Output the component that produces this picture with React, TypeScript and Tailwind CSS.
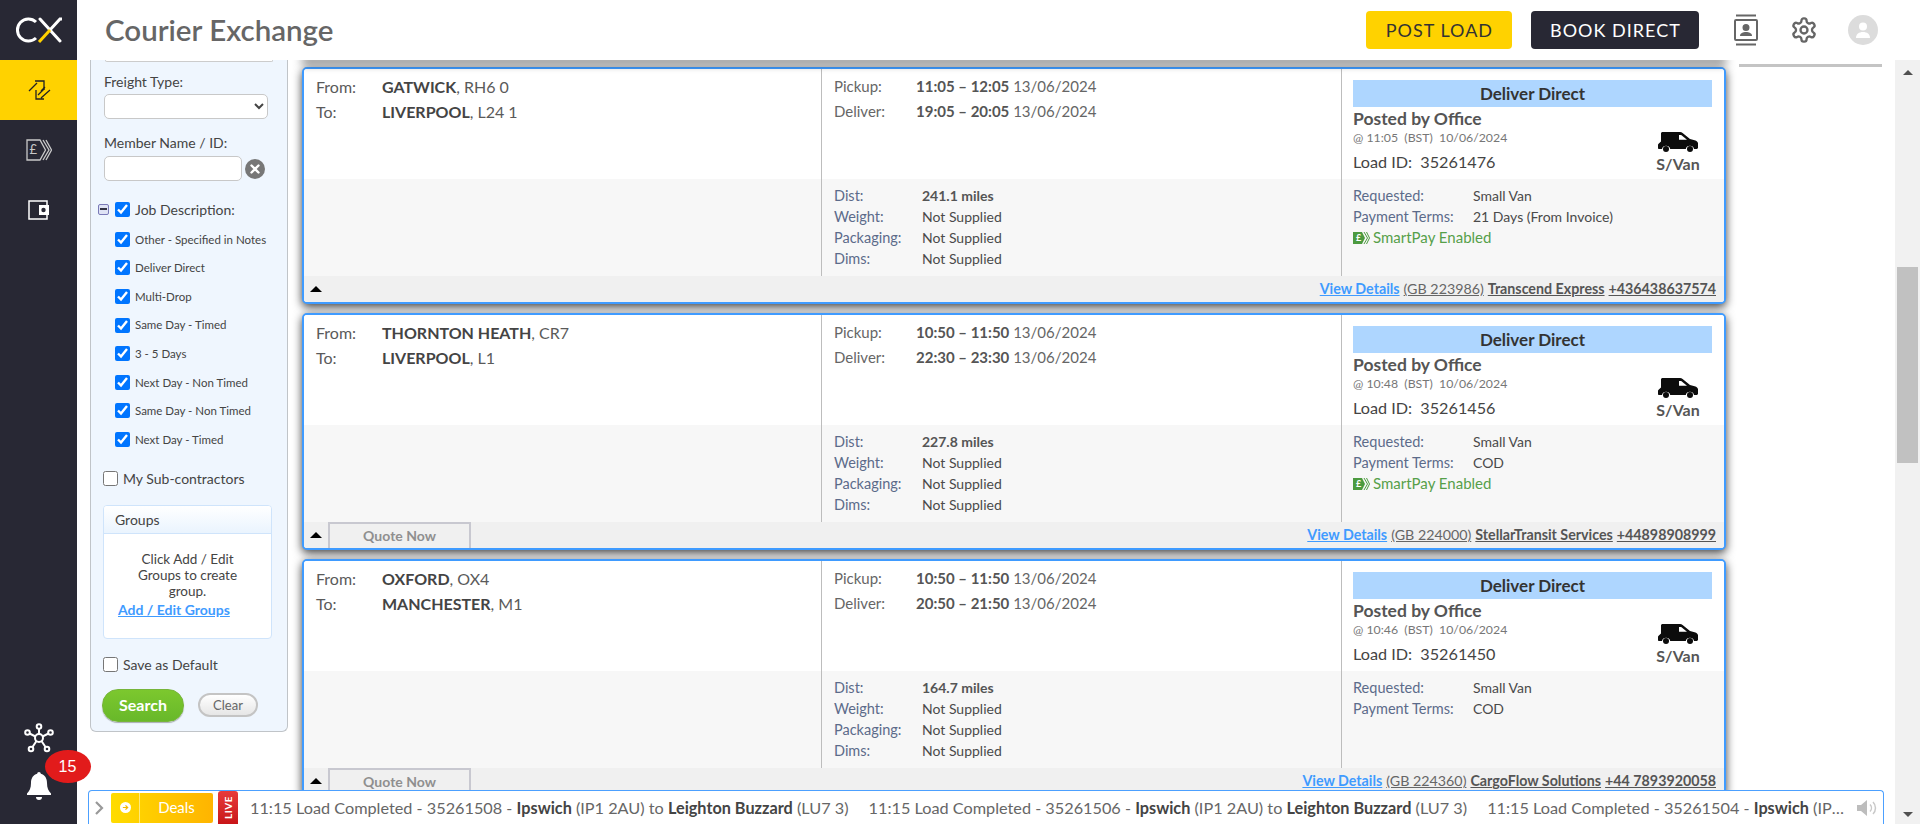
import React from "react";

type Load = {
  from: string; fromPc: string; to: string; toPc: string;
  pick: string; pickD: string; del: string; delD: string;
  miles: string; posted: string; id: string; terms: string; smart: boolean;
  gb: string; company: string; phone: string; quote: boolean;
};

const loads: Load[] = [
  { from: "GATWICK", fromPc: "RH6 0", to: "LIVERPOOL", toPc: "L24 1", pick: "11:05 – 12:05", pickD: "13/06/2024", del: "19:05 – 20:05", delD: "13/06/2024", miles: "241.1 miles", posted: "11:05", id: "35261476", terms: "21 Days (From Invoice)", smart: true, gb: "(GB 223986)", company: "Transcend Express", phone: "+436438637574", quote: false },
  { from: "THORNTON HEATH", fromPc: "CR7", to: "LIVERPOOL", toPc: "L1", pick: "10:50 – 11:50", pickD: "13/06/2024", del: "22:30 – 23:30", delD: "13/06/2024", miles: "227.8 miles", posted: "10:48", id: "35261456", terms: "COD", smart: true, gb: "(GB 224000)", company: "StellarTransit Services", phone: "+44898908999", quote: true },
  { from: "OXFORD", fromPc: "OX4", to: "MANCHESTER", toPc: "M1", pick: "10:50 – 11:50", pickD: "13/06/2024", del: "20:50 – 21:50", delD: "13/06/2024", miles: "164.7 miles", posted: "10:46", id: "35261450", terms: "COD", smart: false, gb: "(GB 224360)", company: "CargoFlow Solutions", phone: "+44 7893920058", quote: true },
];

const jobs = ["Other - Specified in Notes", "Deliver Direct", "Multi-Drop", "Same Day - Timed", "3 - 5 Days", "Next Day - Non Timed", "Same Day - Non Timed", "Next Day - Timed"];

function Van() {
  return (
    <svg width="40" height="20" viewBox="0 0 40 20">
      <path fill="#0c0c0c" d="M3 1.500C3 .7 3.700 0 4.500 0H22c1 0 1.900.3 2.600 1l7.400 6 5.500 1.500c1.300.5 2.500 1.500 2.500 3v4c0 .8-.7 1.500-1.500 1.500H36a4.200 4.200 0 0 0-8.200 0H12.200A4.200 4.200 0 0 0 4 17H1c-.6 0-1-.5-1-1v-3c0-.5.2-1 .6-1.300L3 9.500z" />
      <path fill="#fff" d="M21 3h2.200l5.800 4.800H21z" />
      <circle cx="8" cy="17" r="3" fill="#0c0c0c" />
      <circle cx="32" cy="17" r="3" fill="#0c0c0c" />
    </svg>
  );
}

function PoundTag() {
  const c = "#4c9a3f";
  return (
    <span className="relative inline-flex w-[17px] h-[14px] mr-[3px] items-center">
      <svg width="17" height="14" viewBox="0 0 17 14" className="absolute left-0 top-0">
        <path fill={c} d="M0 1h9l3 6-3 6H0z" />
        <path fill="none" stroke={c} strokeWidth="1" d="M11 1l3.500 6-3.500 6M13.500 1l3 6-3 6" />
      </svg>
      <span className="relative text-white text-[9px] font-bold pl-[3px]">£</span>
    </span>
  );
}

function Card({ l, first }: { l: Load; first: boolean }) {
  const label = "text-[#5c6b8a] text-[14.500px]";
  return (
    <div className={`${first ? "" : "mt-[9px]"} w-[1424px] h-[237px] shrink-0 border-2 border-[#3f9bff] rounded-[5px] bg-white shadow-[0_3px_10px_rgba(0,0,0,0.75)] flex flex-col overflow-hidden`}>
      <div className="flex h-[110px] bg-white">
        <div className="w-[517px] pl-[12px] pt-[5px] text-[16px] leading-[25px] text-[#5a5a5a]">
          <div className="flex"><span className="w-[66px]">From:</span><span><b className="text-[#444] font-bold">{l.from}</b>, {l.fromPc}</span></div>
          <div className="flex"><span className="w-[66px]">To:</span><span><b className="text-[#444] font-bold">{l.to}</b>, {l.toPc}</span></div>
        </div>
        <div className="w-[520px] border-l border-[#bdbdbd] pl-[12px] pt-[5px] text-[15px] leading-[24.500px] text-[#666]">
          <div className="flex"><span className="w-[82px]">Pickup:</span><span><b className="text-[#555] font-bold">{l.pick}</b> {l.pickD}</span></div>
          <div className="flex"><span className="w-[82px]">Deliver:</span><span><b className="text-[#555] font-bold">{l.del}</b> {l.delD}</span></div>
        </div>
        <div className="flex-1 border-l border-[#bdbdbd] pl-[11px] pr-[12px] pt-[11px]">
          <div className="h-[27px] bg-[#aed6ff] text-center text-[17px] leading-[27px] font-bold text-[#333]">Deliver Direct</div>
          <div className="flex justify-between">
            <div>
              <div className="text-[17.500px] leading-[23px] font-bold text-[#555]">Posted by Office</div>
              <div className="text-[12.300px] leading-[16px] text-[#777] whitespace-pre">@ {l.posted}  (BST)  10/06/2024</div>
              <div className="text-[16.200px] leading-[31px] text-[#444] whitespace-pre">Load ID:  {l.id}</div>
            </div>
            <div className="w-[60px] mr-[4px] flex flex-col items-center pt-[25px]">
              <Van />
              <div className="text-[16px] leading-[24px] font-bold text-[#555]">S/Van</div>
            </div>
          </div>
        </div>
      </div>
      <div className="flex h-[97px] bg-[#f7f7f7] text-[14px] leading-[21px] text-[#4a4a4a]">
        <div className="w-[517px]" />
        <div className="w-[520px] border-l border-[#bdbdbd] pl-[12px] pt-[6px]">
          <div className="flex"><span className={`w-[88px] ${label}`}>Dist:</span><b className="text-[#555] font-bold">{l.miles}</b></div>
          <div className="flex"><span className={`w-[88px] ${label}`}>Weight:</span><span>Not Supplied</span></div>
          <div className="flex"><span className={`w-[88px] ${label}`}>Packaging:</span><span>Not Supplied</span></div>
          <div className="flex"><span className={`w-[88px] ${label}`}>Dims:</span><span>Not Supplied</span></div>
        </div>
        <div className="flex-1 border-l border-[#bdbdbd] pl-[11px] pt-[6px]">
          <div className="flex"><span className={`w-[120px] ${label}`}>Requested:</span><span>Small Van</span></div>
          <div className="flex"><span className={`w-[120px] ${label}`}>Payment Terms:</span><span>{l.terms}</span></div>
          {l.smart && <div className="flex items-center text-[#56a04a] text-[15px]"><PoundTag />SmartPay Enabled</div>}
        </div>
      </div>
      <div className="flex items-end h-[26px] bg-[#f0f0f0]">
        <div className="w-[24px] h-full flex items-center justify-center shrink-0">
          <div className="w-0 h-0 border-l-[6px] border-r-[6px] border-b-[6px] border-l-transparent border-r-transparent border-b-black" />
        </div>
        {l.quote && <div className="w-[143px] h-[26px] border-2 border-b-0 border-[#c8c8d0] text-center text-[14px] leading-[24px] font-bold text-[#8f8f8f]">Quote Now</div>}
        <div className="flex-1 h-full flex items-center justify-end pr-[8px] text-[14.250px] text-[#555] gap-[4px] whitespace-nowrap">
          <a className="font-bold text-[#3f9bff] underline">View Details</a>
          <span className="underline text-[#666]">{l.gb}</span>
          <span className="font-bold underline">{l.company}</span>
          <span className="font-bold underline">{l.phone}</span>
        </div>
      </div>
    </div>
  );
}

function Filter() {
  return (
    <div className="w-[198px] h-[672px] shrink-0 ml-[13px] bg-[#eff6fe] border border-t-0 border-[#c0c4c8] rounded-b-[6px] text-[#444] flex flex-col relative z-10">
      <div className="mx-[14px] h-[2px] bg-white border border-t-0 border-[#ccc] rounded-b-[6px]" />
      <div className="pl-[13px] mt-[11px] text-[14px] leading-[18px]">Freight Type:</div>
      <select className="ml-[13px] mt-[3px] w-[164px] h-[25px] bg-white border border-[#c8c8c8] rounded-[5px] text-[14px]"><option></option></select>
      <div className="pl-[13px] mt-[15px] text-[14px] leading-[18px]">Member Name / ID:</div>
      <div className="flex items-center mt-[4px] ml-[13px]">
        <input className="w-[138px] h-[25px] bg-white border border-[#c8c8c8] rounded-[5px]" readOnly />
        <div className="ml-[3px] w-[20px] h-[20px] rounded-full bg-[#777] flex items-center justify-center">
          <svg width="10" height="10" viewBox="0 0 10 10"><path d="M1.500 1.500l7 7M8.500 1.500l-7 7" stroke="#fff" strokeWidth="2.400" strokeLinecap="round" /></svg>
        </div>
      </div>
      <div className="flex items-center mt-[18px] ml-[7px] h-[20px]">
        <span className="w-[11px] h-[11px] border border-[#7a7ab8] bg-[#dfe3f5] rounded-[2px] flex items-center justify-center mr-[6px]"><span className="w-[7px] h-[1.500px] bg-[#334]" /></span>
        <input type="checkbox" defaultChecked className="w-[15px] h-[15px] m-0" />
        <span className="ml-[5px] text-[14px]">Job Description:</span>
      </div>
      <div className="mt-[6px] flex flex-col">
        {jobs.map((j) => (
          <div key={j} className="flex items-center h-[28.600px] pl-[24px]">
            <input type="checkbox" defaultChecked className="w-[15px] h-[15px] m-0" />
            <span className="ml-[5px] text-[11.500px] whitespace-nowrap">{j}</span>
          </div>
        ))}
      </div>
      <div className="flex items-center mt-[15px] pl-[12px] h-[20px]">
        <input type="checkbox" className="w-[15px] h-[15px] m-0" />
        <span className="ml-[5px] text-[14px]">My Sub-contractors</span>
      </div>
      <div className="mt-[16px] ml-[12px] w-[169px] h-[134px] border border-[#cfe4fb] rounded-[4px] bg-white overflow-hidden">
        <div className="h-[28px] px-[11px] text-[14px] leading-[27px] border-b border-[#cfe4fb] bg-gradient-to-b from-white to-[#eaf4fe]">Groups</div>
        <div className="px-[12px] pt-[17px] text-center text-[13.500px] leading-[16.300px]">
          <div>Click Add / Edit</div>
          <div>Groups to create</div>
          <div>group.</div>
          <div className="text-left pl-[2px] font-bold text-[#3f9bff] underline text-[14px] leading-[20px]">Add / Edit Groups</div>
        </div>
      </div>
      <div className="flex items-center mt-[16px] pl-[12px] h-[20px]">
        <input type="checkbox" className="w-[15px] h-[15px] m-0" />
        <span className="ml-[5px] text-[14px]">Save as Default</span>
      </div>
      <div className="flex items-center mt-[14px] pl-[11px]">
        <button className="w-[82px] h-[33px] rounded-[16px] bg-gradient-to-b from-[#7cc82e] to-[#68b82a] border border-[#77b53a] text-white font-bold text-[16px] shadow-[0_1px_1px_rgba(0,0,0,0.3)]">Search</button>
        <button className="ml-[14px] w-[60px] h-[24px] rounded-[12px] bg-gradient-to-b from-white to-[#e6e6e6] border-2 border-[#c4c4c4] text-[#666] text-[13px] leading-[18px]">Clear</button>
      </div>
    </div>
  );
}

function Ticker() {
  const item = (id: string) => (
    <span className="mr-[20px]">11:15 Load Completed - {id} - <b className="text-[#444] font-bold">Ipswich</b> (IP1 2AU) to <b className="text-[#444] font-bold">Leighton Buzzard</b> (LU7 3)</span>
  );
  return (
    <div className="relative z-20 ml-[11px] w-[1796px] h-[34px] shrink-0 bg-white border border-b-0 border-[#4ca0ff] rounded-t-[4px] flex items-center">
      <svg width="10" height="16" viewBox="0 0 10 16" className="ml-[5px] shrink-0"><path d="M2 2l6 6-6 6" fill="none" stroke="#999" strokeWidth="2.200" /></svg>
      <div className="ml-[7px] w-[102px] h-[30px] shrink-0 rounded-[2px] bg-gradient-to-r from-[#ffdc00] to-[#ffb400] flex items-center text-white text-[15px]">
        <div className="w-[29px] h-full border-r border-[#ffe97a] flex items-center justify-center">
          <span className="w-[11px] h-[11px] rounded-full bg-white flex items-center justify-center"><svg width="7" height="7" viewBox="0 0 8 8"><path d="M1 4h5M4 1.500L6.500 4 4 6.500" stroke="#f5b800" strokeWidth="1.400" fill="none" /></svg></span>
        </div>
        <div className="flex-1 text-center">Deals</div>
      </div>
      <div className="ml-[5px] w-[20px] h-[33px] shrink-0 self-end bg-gradient-to-b from-[#e83a3a] to-[#c81418] rounded-t-[3px] flex items-center justify-center">
        <span className="text-white font-bold text-[10px] -rotate-90 tracking-[0.5px]">LIVE</span>
      </div>
      <div className="ml-[12px] pt-[1px] flex-1 min-w-0 overflow-hidden text-ellipsis whitespace-nowrap text-[16.250px] text-[#666]">
        {item("35261508")}{item("35261506")}{item("35261504")}
      </div>
      <svg width="24" height="18" viewBox="0 0 24 18" className="ml-[8px] mr-[3px] shrink-0">
        <path fill="#bdbdbd" d="M1 6h4l6-5v16l-6-5H1z" />
        <path fill="none" stroke="#c9c9c9" strokeWidth="1.500" d="M14 5.500a5 5 0 0 1 0 7M17 3a8.500 8.500 0 0 1 0 12" />
      </svg>
    </div>
  );
}

function NavIcon({ i }: { i: number }) {
  if (i === 0)
    return (
      <svg width="32" height="32" viewBox="0 0 32 32" fill="none" stroke="#222" strokeWidth="1.300">
        <path d="M6 17l8-8M12 7h9v9" />
        <path d="M27 16l-9 8M13 16v9h8" />
        <path d="M15 21l6-6M18 17l4-4" />
      </svg>
    );
  if (i === 1)
    return (
      <span className="relative inline-flex w-[26px] h-[22px] items-center">
        <svg width="26" height="22" viewBox="0 0 26 22" fill="none" stroke="#c9c9c9" strokeWidth="1.300" className="absolute left-0 top-0">
          <path d="M14 1H1v20h13l5.500-10z" />
          <path d="M17 1l6 10-6 10M20 1l5.500 10L20 21" />
        </svg>
        <span className="relative pl-[4px] text-[13px] text-[#c9c9c9]">£</span>
      </span>
    );
  return (
    <svg width="22" height="20" viewBox="0 0 22 20">
      <path d="M1 1h18v18H1z" fill="none" stroke="#fff" strokeWidth="1.500" />
      <path d="M11 5h10v10H11z" fill="#fff" />
      <circle cx="15.500" cy="10" r="2.200" fill="#282834" />
    </svg>
  );
}

export default function App() {
  return (
    <div className="w-[1920px] h-[824px] flex overflow-hidden bg-white font-['Lato',sans-serif]">
      <aside className="w-[77px] shrink-0 bg-[#282834] flex flex-col relative z-30">
        <div className="h-[60px] flex items-center justify-center">
          <svg width="48" height="26" viewBox="0 0 48 26" fill="none" strokeWidth="3">
            <path d="M21 5a11 11 0 1 0 0 16" stroke="#fff" />
            <path d="M25 2l20 22" stroke="#fff" strokeLinecap="round" />
            <path d="M47 2H45L34 14" stroke="#fff" />
            <path d="M24 25l11-12" stroke="#ffd200" />
          </svg>
        </div>
        {[0, 1, 2].map((i) => (
          <div key={i} className={`h-[60px] flex items-center justify-center ${i === 0 ? "bg-[#ffd200]" : ""}`}><NavIcon i={i} /></div>
        ))}
        <div className="mt-auto flex flex-col items-center pb-[23px]">
          <svg width="30" height="30" viewBox="0 0 30 30" fill="none" stroke="#fff" strokeWidth="2">
            <circle cx="15" cy="15" r="4" /><circle cx="15" cy="3.500" r="2.300" /><circle cx="3.500" cy="9.500" r="2.300" /><circle cx="26.500" cy="9.500" r="2.300" /><circle cx="7" cy="26" r="2.300" /><circle cx="23" cy="26" r="2.300" />
            <path d="M15 6v5M5.500 10.500l6 3M24.500 10.500l-6 3M8.500 24l4-6M21.500 24l-4-6" />
          </svg>
          <div className="relative mt-[18px]">
            <svg width="26" height="30" viewBox="0 0 26 30"><path fill="#fff" d="M13 1c1 0 1.800.8 1.800 1.800C19 4 21 7.500 21 12c0 5 1.500 8 4 10.500V24H1v-1.500C3.500 20 5 17 5 12c0-4.500 2-8 6.200-9.200C11.200 1.800 12 1 13 1z" /><path fill="#fff" d="M10 26h6a3 3 0 0 1-6 0z" /></svg>
            <div className="absolute left-[19px] -top-[21px] w-[46px] h-[33px] rounded-[50%] bg-[#e21b1b] text-white text-[16px] text-center leading-[33px] font-['Liberation_Sans',sans-serif] z-10">15</div>
          </div>
        </div>
      </aside>
      <div className="flex-1 min-w-0 flex flex-col">
        <header className="h-[60px] shrink-0 bg-white flex items-center pl-[28px] pr-[42px] relative z-20">
          <div className="text-[29.500px] font-semibold text-[#666]">Courier Exchange</div>
          <button className="ml-auto w-[146px] h-[38px] rounded-[4px] bg-[#ffd200] text-[#333] text-[18px] tracking-[1px]">POST LOAD</button>
          <button className="ml-[19px] w-[168px] h-[38px] rounded-[4px] bg-[#282834] text-white text-[18px] tracking-[1px]">BOOK DIRECT</button>
          <svg width="24" height="32" viewBox="0 0 24 32" className="ml-[34.600px]" fill="none" stroke="#666" strokeWidth="2">
            <path d="M2 1.500h20M2 30.500h20" /><rect x="1" y="6" width="22" height="20" rx="1" />
            <circle cx="12" cy="13.500" r="2.500" fill="#666" /><path d="M6 22c0-3 3-4 6-4s6 1 6 4z" fill="#666" stroke="none" />
          </svg>
          <svg width="28" height="28" viewBox="0 0 24 24" className="ml-[32.400px]" fill="none" stroke="#666" strokeWidth="2" strokeLinecap="round" strokeLinejoin="round">
            <path d="M12.220 2h-.44a2 2 0 0 0-2 2v.18a2 2 0 0 1-1 1.730l-.43.250a2 2 0 0 1-2 0l-.15-.080a2 2 0 0 0-2.730.730l-.22.380a2 2 0 0 0 .730 2.730l.15.100a2 2 0 0 1 1 1.720v.510a2 2 0 0 1-1 1.740l-.15.090a2 2 0 0 0-.730 2.730l.22.380a2 2 0 0 0 2.730.730l.15-.080a2 2 0 0 1 2 0l.43.250a2 2 0 0 1 1 1.730V20a2 2 0 0 0 2 2h.44a2 2 0 0 0 2-2v-.18a2 2 0 0 1 1-1.730l.43-.250a2 2 0 0 1 2 0l.15.080a2 2 0 0 0 2.730-.730l.22-.390a2 2 0 0 0-.730-2.730l-.15-.080a2 2 0 0 1-1-1.740v-.500a2 2 0 0 1 1-1.740l.15-.090a2 2 0 0 0 .730-2.730l-.22-.380a2 2 0 0 0-2.730-.730l-.15.080a2 2 0 0 1-2 0l-.43-.250a2 2 0 0 1-1-1.730V4a2 2 0 0 0-2-2z" />
            <circle cx="12" cy="12" r="3" />
          </svg>
          <div className="ml-[29.600px] w-[30px] h-[30px] rounded-full bg-[#dcdcdc] flex items-center justify-center">
            <svg width="18" height="18" viewBox="0 0 18 18" fill="#fff"><circle cx="9" cy="5.500" r="4" /><path d="M2 17c0-4 3-6 7-6s7 2 7 6z" /></svg>
          </div>
        </header>
        <div className="flex-1 min-h-0 flex">
          <div className="w-[1818px] min-w-0 flex flex-col">
            <div className="flex-1 min-h-0 flex overflow-hidden">
              <Filter />
              <div className="pl-[14px] pr-[13px] flex flex-col pt-[7px] overflow-hidden relative shrink-0">
                <div className="absolute left-[14px] right-[13px] -top-[5px] h-[5px] shadow-[0_3px_10px_rgba(0,0,0,0.75)]" />
                {loads.map((l, i) => <Card key={l.id} l={l} first={i === 0} />)}
              </div>
              <div className="mt-[4px] w-[143px] h-[3px] bg-[#c4c4c4]" />
            </div>
            <Ticker />
          </div>
          <div className="w-[25px] shrink-0 bg-[#f1f1f1] flex flex-col items-center">
            <div className="mt-[10px] w-0 h-0 border-l-[5px] border-r-[5px] border-b-[5px] border-l-transparent border-r-transparent border-b-[#505050]" />
            <div className="mt-[192px] w-[21px] h-[196px] bg-[#c1c1c1]" />
            <div className="mt-auto mb-[7px] w-0 h-0 border-l-[5px] border-r-[5px] border-t-[5px] border-l-transparent border-r-transparent border-t-[#505050]" />
          </div>
        </div>
      </div>
    </div>
  );
}
